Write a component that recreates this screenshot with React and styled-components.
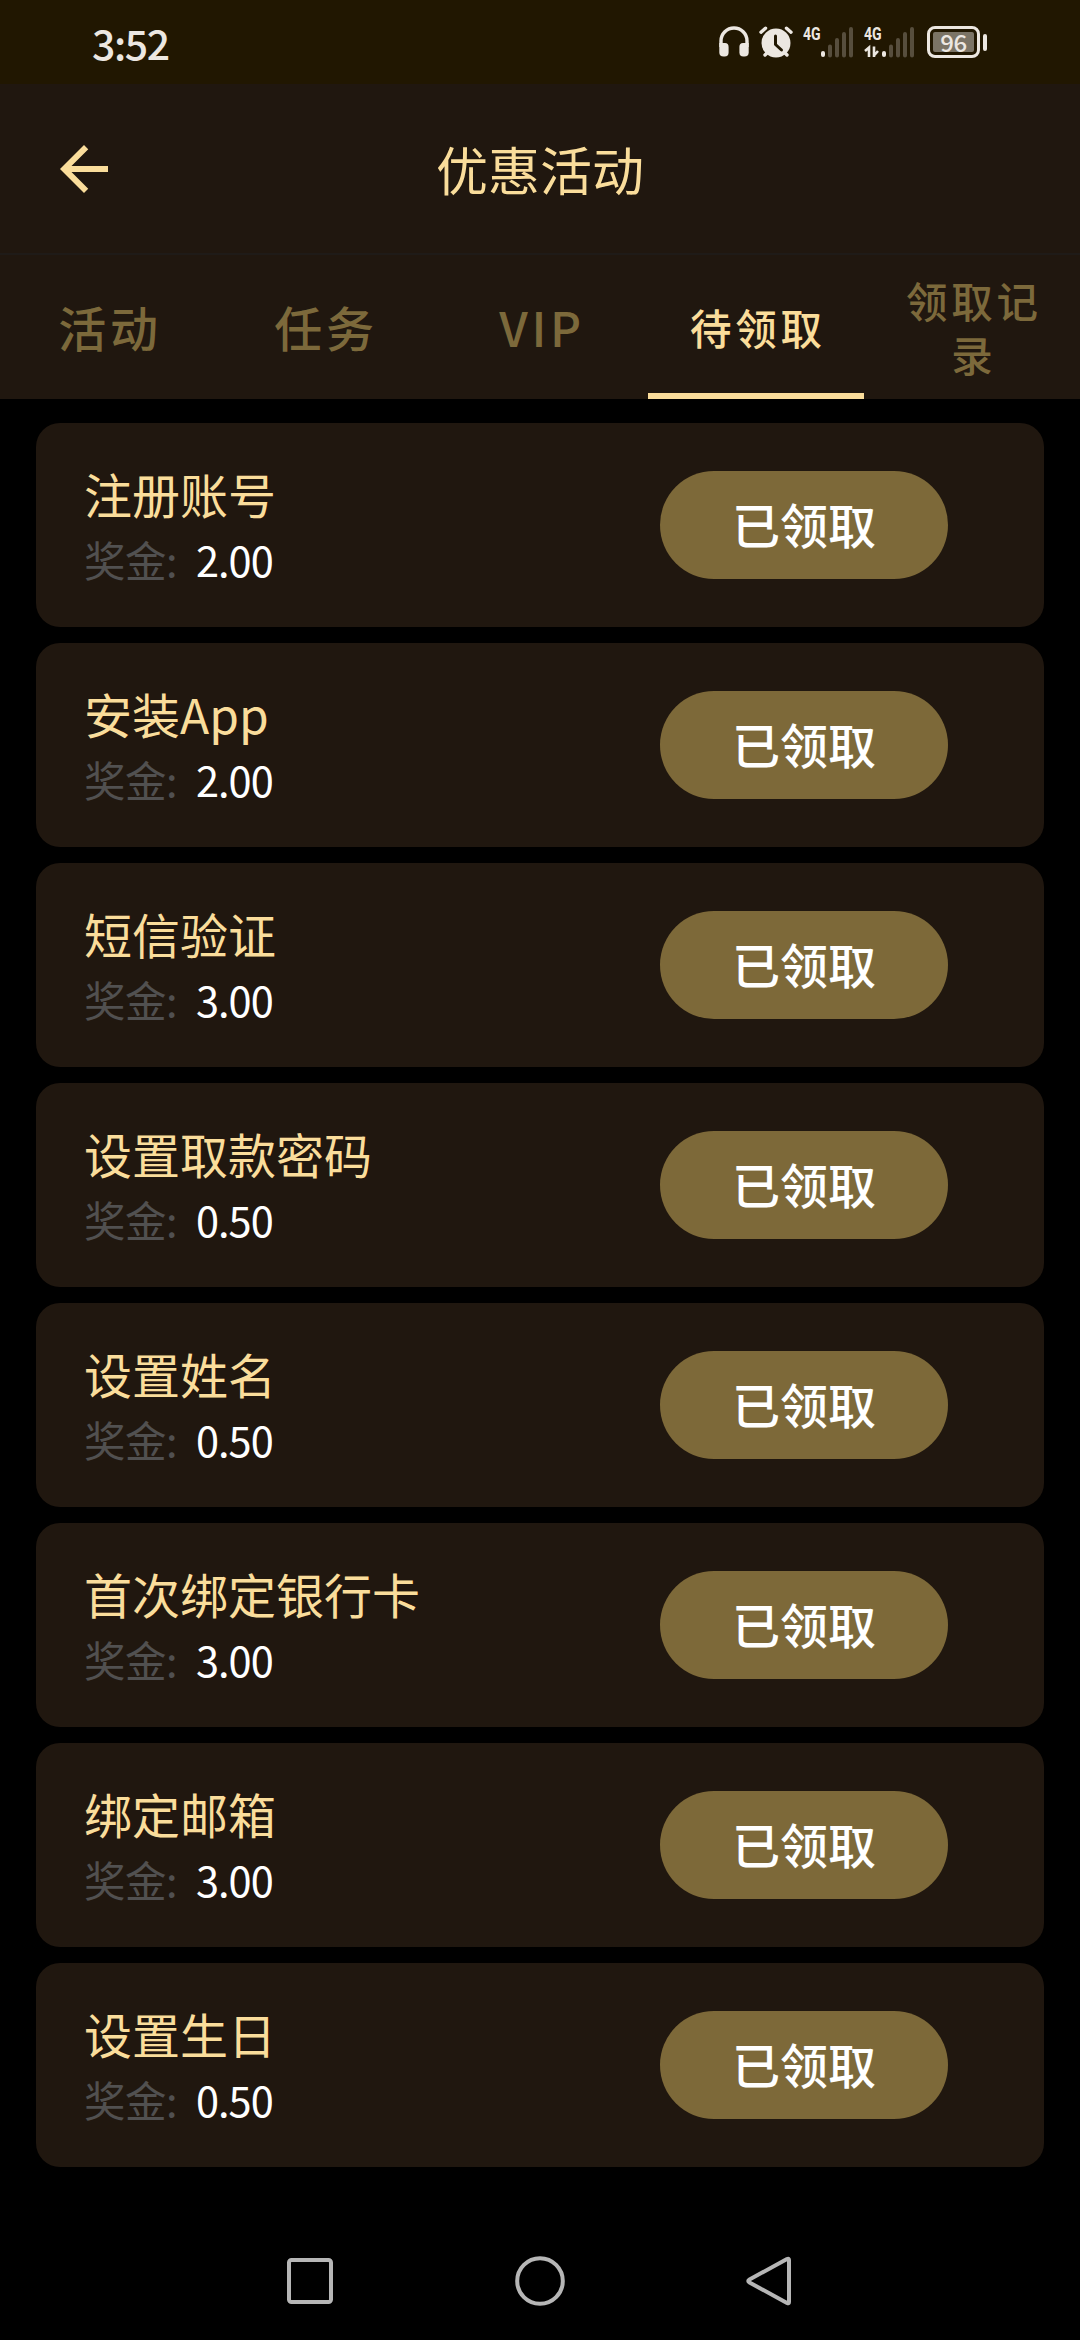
import React from 'react';
import styled, { createGlobalStyle } from 'styled-components';

const GlobalStyle = createGlobalStyle`
  * { box-sizing: border-box; }
  body {
    margin: 0;
    background: #000;
    font-family: 'Noto Sans CJK SC', 'Noto Sans', sans-serif;
  }
`;

const Screen = styled.div`
  display: flex;
  flex-direction: column;
  width: 1080px;
  height: 2340px;
  background: #000;
  overflow: hidden;
`;

const StatusBar = styled.div`
  display: flex;
  align-items: flex-start;
  justify-content: space-between;
  height: 84px;
  padding: 24px 93px 0 92px;
  background: #211701;
  color: #ece7e1;
`;

const Clock = styled.span`
  margin-top: -3px;
  font-size: 41px;
  font-weight: 500;
  line-height: 42px;
  letter-spacing: -1.4px;
`;

const StatusIcons = styled.div`
  display: flex;
  align-items: flex-start;
  height: 42px;
  padding-top: 2px;
`;

const StatusIcon = styled.svg`
  display: block;
  flex: none;
  margin-right: ${(p) => p.$gap || 0}px;
`;

const Signal = styled.div`
  display: grid;
  grid-template: 14px 18px / 18px 33px;
  width: 51px;
  margin-right: ${(p) => p.$gap}px;
`;

const NetworkType = styled.span`
  display: block;
  font-family: 'Roboto', sans-serif;
  font-size: 19px;
  font-weight: 700;
  line-height: 16px;
  transform: scaleX(0.74);
  transform-origin: left;
`;

const SignalBars = styled.svg`
  grid-column: 1 / 3;
  grid-row: 1 / 3;
  display: block;
`;

const NetworkCell = styled.div`
  grid-column: 1;
  grid-row: 1;
  white-space: nowrap;
`;

const Battery = styled.div`
  display: flex;
  align-items: center;
  gap: 3px;
`;

const BatteryCase = styled.div`
  width: 53px;
  height: 32px;
  padding: 3px;
  border: 3px solid #ece7e1;
  border-radius: 8px;
`;

const BatteryLevel = styled.div`
  display: flex;
  align-items: center;
  justify-content: center;
  width: 41px;
  height: 20px;
  border-radius: 2px;
  background: #7b7466;
  font-size: 24px;
  font-weight: 500;
  line-height: 20px;
  letter-spacing: -0.5px;
`;

const BatteryTip = styled.div`
  width: 4px;
  height: 17px;
  border-radius: 2px;
  background: #ece7e1;
`;

const Header = styled.header`
  display: grid;
  grid-template-columns: 144px 1fr 144px;
  align-items: center;
  height: 171px;
  border-bottom: 2px solid #1f1b18;
  padding: 0 24px 0 24px;
  background: #20170f;
  color: #fadd9b;
`;

const BackButton = styled.button`
  display: flex;
  padding: 0 24px;
  border: 0;
  background: none;
  color: inherit;
`;

const Title = styled.h1`
  margin: 0;
  font-size: 52px;
  font-weight: 400;
  line-height: 72px;
  text-align: center;
`;

const Tabs = styled.nav`
  display: flex;
  height: 144px;
  background: #20170f;
`;

const Tab = styled.button`
  display: flex;
  align-items: center;
  justify-content: center;
  width: 216px;
  padding: ${(p) => (p.$small ? 6 : 4)}px 34px 0 38px;
  border: 0;
  border-bottom: 6px solid ${(p) => (p.$active ? '#fadd9b' : 'transparent')};
  background: none;
  color: ${(p) => (p.$active ? '#fadd9b' : '#7c693b')};
  font-family: inherit;
  font-size: ${(p) => (p.$small ? 41.5 : 48)}px;
  font-weight: 500;
  line-height: ${(p) => (p.$small ? 54 : 64)}px;
  letter-spacing: 3.75px;
  text-align: center;
`;

const RewardList = styled.main`
  display: flex;
  flex-direction: column;
  flex: 1;
  gap: 16px;
  padding: 24px 36px 0;
`;

const RewardCard = styled.article`
  display: flex;
  align-items: center;
  justify-content: space-between;
  height: 204px;
  padding: 0 96px 0 48px;
  border-radius: 24px;
  background: #20170f;
`;

const RewardName = styled.h2`
  margin: 0;
  color: #fadd9b;
  font-size: 48px;
  font-weight: 400;
  line-height: 68px;
`;

const Bonus = styled.p`
  display: flex;
  gap: 19px;
  margin: 0;
  font-size: 41.5px;
  line-height: 64px;
`;

const BonusLabel = styled.span`
  color: #515050;
  letter-spacing: -0.5px;
`;

const BonusValue = styled.span`
  color: #fff;
  letter-spacing: -1px;
`;

const ClaimButton = styled.button`
  width: 288px;
  height: 108px;
  padding: 0 0 4px;
  border: 0;
  border-radius: 54px;
  background: #7d6939;
  color: #fff;
  font-family: inherit;
  font-size: 48px;
  font-weight: 500;
`;

const NavBar = styled.footer`
  display: flex;
  justify-content: center;
  height: 118px;
`;

const NavButton = styled.button`
  display: flex;
  align-items: center;
  justify-content: center;
  width: 230px;
  padding: 0;
  border: 0;
  background: none;
  color: #b6b6b6;
`;

const Headphones = () => (
  <StatusIcon $gap={10} width="30" height="32" viewBox="0 0 30 32" fill="currentColor">
    <path d="M2 21V15a13 13 0 0 1 26 0v6" fill="none" stroke="currentColor" strokeWidth="3.4" />
    <path d="M0.3 17h5.7q3.6 0 3.6 4v5.500q0 4-4 4h-1q-4.300 0-4.300-4z" />
    <path d="M29.700 17h-5.700q-3.600 0-3.600 4v5.500q0 4 4 4h1q4.300 0 4.300-4z" />
  </StatusIcon>
);

const Alarm = () => (
  <StatusIcon $gap={10} width="34" height="32" viewBox="0 0 34 32">
    <circle cx="17" cy="17" r="14.500" fill="currentColor" />
    <path d="M2 6.200 6.500 2.200M32 6.200 27.500 2.200M6 29l3-3M28 29l-3-3" stroke="currentColor" strokeWidth="3.400" strokeLinecap="round" />
    <path d="M16.500 10v8.500l6 5.500" fill="none" stroke="#211701" strokeWidth="3" strokeLinecap="round" strokeLinejoin="round" />
  </StatusIcon>
);

const MobileSignal = ({ transfer, gap }) => (
  <Signal $gap={gap}>
    <NetworkCell><NetworkType>4G</NetworkType></NetworkCell>
    <SignalBars width="51" height="32" viewBox="0 0 51 32">
      <path d="M20 27v2" stroke="currentColor" strokeWidth="4" strokeLinecap="round" />
      <path d="M27 20.500v9M34 14v15.500M41 8v21.500M48 3v26.500" stroke="#574e3d" strokeWidth="4" strokeLinecap="round" />
      {transfer && <path d="M1 25 5 21.500V31M10 20.500V31M10 29.500 14 25" fill="none" stroke="currentColor" strokeWidth="2.600" />}
    </SignalBars>
  </Signal>
);

const tabs = [
  { label: '活动' },
  { label: '任务' },
  { label: 'VIP' },
  { label: '待领取', small: true, active: true },
  { label: '领取记录', small: true },
];

const rewards = [
  ['注册账号', '2.00'],
  ['安装App', '2.00'],
  ['短信验证', '3.00'],
  ['设置取款密码', '0.50'],
  ['设置姓名', '0.50'],
  ['首次绑定银行卡', '3.00'],
  ['绑定邮箱', '3.00'],
  ['设置生日', '0.50'],
];

export default function App() {
  return (
    <>
      <GlobalStyle />
      <Screen>
        <StatusBar>
          <Clock>3:52</Clock>
          <StatusIcons>
            <Headphones />
            <Alarm />
            <MobileSignal gap={10} />
            <MobileSignal gap={12} transfer />
            <Battery>
              <BatteryCase><BatteryLevel>96</BatteryLevel></BatteryCase>
              <BatteryTip />
            </Battery>
          </StatusIcons>
        </StatusBar>
        <Header>
          <BackButton aria-label="返回">
            <svg width="72" height="72" viewBox="0 0 24 24" fill="currentColor">
              <path d="M20 11H7.830l5.590-5.590L12 4l-8 8 8 8 1.410-1.410L7.830 13H20v-2z" />
            </svg>
          </BackButton>
          <Title>优惠活动</Title>
        </Header>
        <Tabs>
          {tabs.map((t) => (
            <Tab key={t.label} $small={t.small} $active={t.active}>{t.label}</Tab>
          ))}
        </Tabs>
        <RewardList>
          {rewards.map(([name, amount]) => (
            <RewardCard key={name}>
              <div>
                <RewardName>{name}</RewardName>
                <Bonus>
                  <BonusLabel>奖金:</BonusLabel>
                  <BonusValue>{amount}</BonusValue>
                </Bonus>
              </div>
              <ClaimButton>已领取</ClaimButton>
            </RewardCard>
          ))}
        </RewardList>
        <NavBar>
          <NavButton aria-label="最近任务">
            <svg width="50" height="50" viewBox="0 0 50 50" fill="none" stroke="currentColor" strokeWidth="4">
              <rect x="4" y="4" width="42" height="42" rx="2.500" />
            </svg>
          </NavButton>
          <NavButton aria-label="主屏幕">
            <svg width="50" height="50" viewBox="0 0 50 50" fill="none" stroke="currentColor" strokeWidth="4">
              <circle cx="25" cy="25" r="22.800" />
            </svg>
          </NavButton>
          <NavButton aria-label="后退">
            <svg width="50" height="50" viewBox="0 0 50 50" fill="none" stroke="currentColor" strokeWidth="4">
              <path d="M44 4V46Q44 48 42 47L4.500 26.500Q2 25 4.500 23.500L42 3Q44 2 44 4Z" strokeLinejoin="round" />
            </svg>
          </NavButton>
        </NavBar>
      </Screen>
    </>
  );
}
